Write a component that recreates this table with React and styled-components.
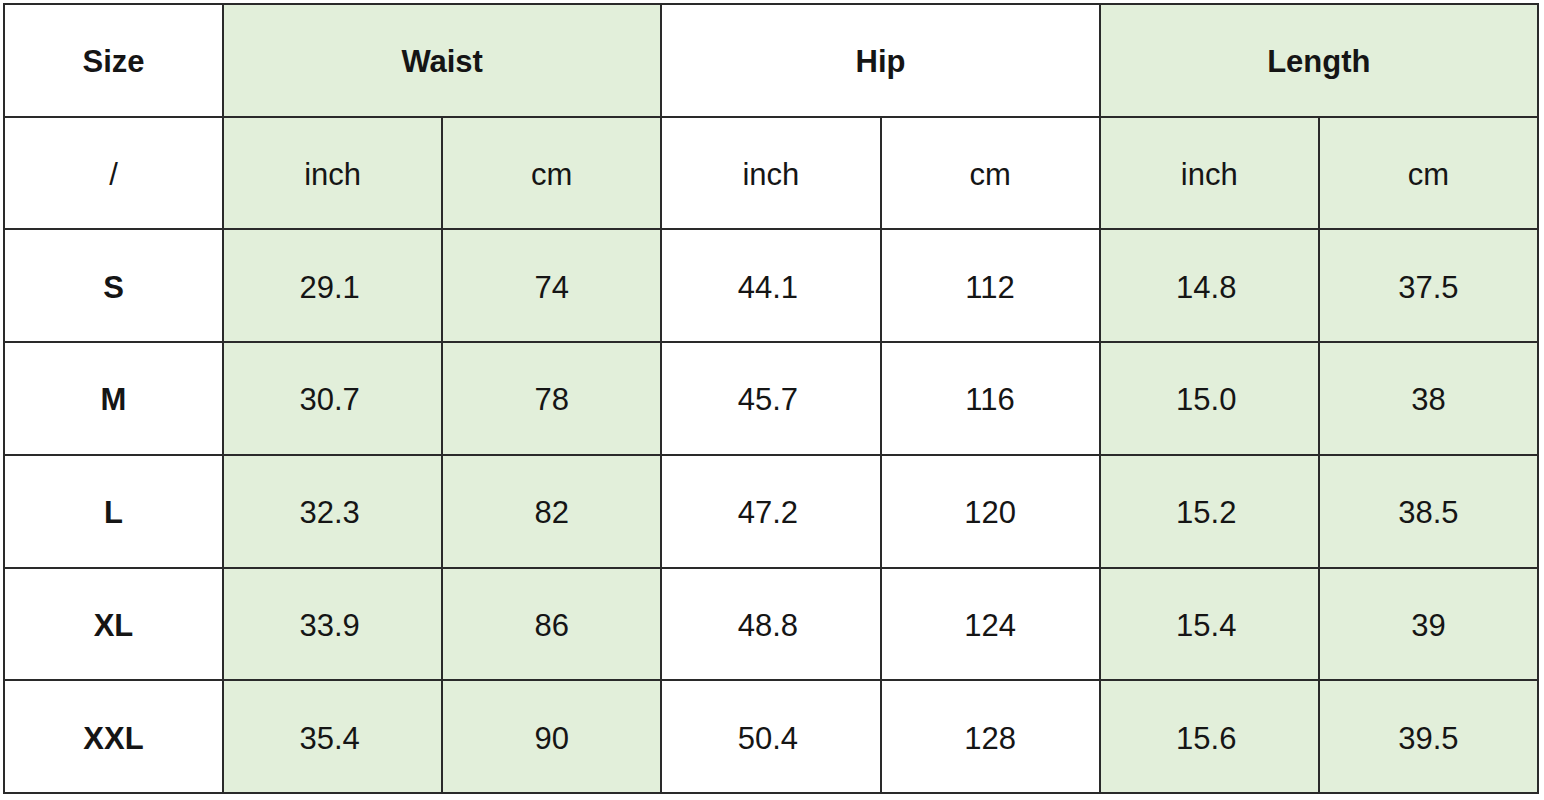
import React from 'react'
import styled, { createGlobalStyle } from 'styled-components'

const Global = createGlobalStyle`
  html, body {
    margin: 0;
    padding: 0;
    background: #fff;
  }
  body {
    font-family: "Liberation Sans", Arial, sans-serif;
    color: #151515;
  }
`

const Page = styled.div`
  padding: 3px 0 0 3px;
`

const Chart = styled.div`
  display: grid;
  grid-template-columns: 217px repeat(6, 1fr);
  grid-template-rows: repeat(7, 1fr);
  gap: 2px;
  padding: 2px;
  width: 1536px;
  height: 791px;
  box-sizing: border-box;
  background: #2a2a2a;
`

const Cell = styled.div`
  display: flex;
  align-items: center;
  justify-content: center;
  padding-top: 4px;
  padding-right: ${p => (p.$num ? '6px' : '0')};
  box-sizing: border-box;
  grid-column: span ${p => p.$span || 1};
  background: ${p => (p.$green ? '#e2efda' : '#fff')};
  font-size: 31px;
  font-weight: ${p => (p.$bold ? 700 : 400)};
`

const groups = [
  { name: 'Waist', green: true },
  { name: 'Hip', green: false },
  { name: 'Length', green: true },
]

const rows = [
  ['S', '29.1', '74', '44.1', '112', '14.8', '37.5'],
  ['M', '30.7', '78', '45.7', '116', '15.0', '38'],
  ['L', '32.3', '82', '47.2', '120', '15.2', '38.5'],
  ['XL', '33.9', '86', '48.8', '124', '15.4', '39'],
  ['XXL', '35.4', '90', '50.4', '128', '15.6', '39.5'],
]

const isGreen = i => i === 1 || i === 2 || i === 5 || i === 6

export default function App() {
  return (
    <Page>
      <Global />
      <Chart>
        <Cell $bold>Size</Cell>
        {groups.map(g => (
          <Cell key={g.name} $span={2} $green={g.green} $bold>{g.name}</Cell>
        ))}

        <Cell>/</Cell>
        {groups.map(g => (
          <React.Fragment key={g.name + '-units'}>
            <Cell $green={g.green}>inch</Cell>
            <Cell $green={g.green}>cm</Cell>
          </React.Fragment>
        ))}

        {rows.map(r =>
          r.map((v, i) => (
            <Cell
              key={r[0] + i}
              $green={isGreen(i)}
              $bold={i === 0}
              $num={i % 2 === 1}
            >
              {v}
            </Cell>
          ))
        )}
      </Chart>
    </Page>
  )
}
